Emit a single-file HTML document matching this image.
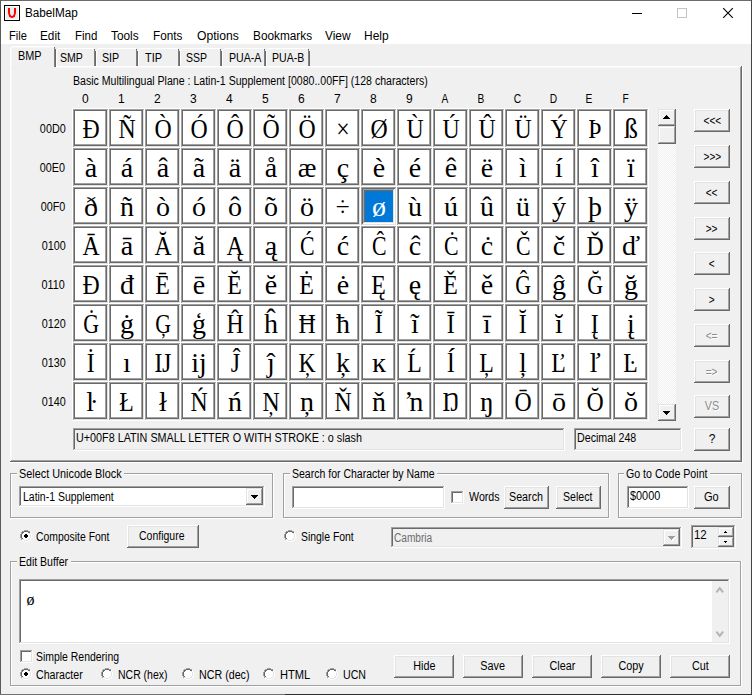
<!DOCTYPE html>
<html lang="en"><head><meta charset="utf-8"><title>BabelMap</title>
<style>
html,body{margin:0;padding:0}
body{width:752px;height:695px;overflow:hidden;background:#f0f0f0;position:relative;font-family:'Liberation Sans',sans-serif;font-size:12px;line-height:12px;color:#000}
div{position:absolute;box-sizing:border-box}
.t{position:absolute;white-space:pre;transform-origin:0 50%}
.c{width:36px;height:39px;background:#fff;font-family:'Liberation Serif',serif;font-size:28px;line-height:28px;text-align:center;padding-top:6px;
 box-shadow:inset -1px -1px 0 #fff, inset 1px 1px 0 #a0a0a0, inset -2px -2px 0 #e3e3e3, inset 2px 2px 0 #696969, inset -3px -3px 0 #696969, inset -4px -4px 0 #a0a0a0}
.g{display:inline-block}
.c.s{box-shadow:inset -1px -1px 0 #fff, inset 1px 1px 0 #a0a0a0, inset -2px -2px 0 #e3e3e3, inset 2px 2px 0 #696969, inset -3px -3px 0 #fff, inset 3px 3px 0 #a0a0a0,inset -4px -4px 0 #e3e3e3, inset 4px 4px 0 #696969;color:#fff}
.c.s b{font-weight:normal;display:block;position:absolute;left:4px;top:4px;width:28px;height:31px;background:#0078d7;padding-top:2px;box-sizing:border-box}
.btn{background:#f0f0f0;box-shadow:inset -1px -1px 0 #696969, inset 1px 1px 0 #fff, inset -2px -2px 0 #a0a0a0, inset 2px 2px 0 #e3e3e3}
.sb{background:#f0f0f0;box-shadow:inset -1px -1px 0 #696969, inset 1px 1px 0 #e3e3e3, inset -2px -2px 0 #a0a0a0, inset 2px 2px 0 #fff}
.sunk1{box-shadow:inset -1px -1px 0 #fff, inset 1px 1px 0 #a0a0a0}
.sunk2{box-shadow:inset -1px -1px 0 #fff, inset 1px 1px 0 #a0a0a0, inset -2px -2px 0 #e3e3e3, inset 2px 2px 0 #696969}
.grp{box-shadow:inset -1px -1px 0 #fff, inset 1px 1px 0 #a0a0a0, inset -2px -2px 0 #a0a0a0, inset 2px 2px 0 #fff}
.radio::before{content:'';position:absolute;left:0;top:0;width:1px;height:1px;box-shadow:4px 0px 0 #a0a0a0,5px 0px 0 #a0a0a0,6px 0px 0 #a0a0a0,7px 0px 0 #a0a0a0,2px 1px 0 #a0a0a0,3px 1px 0 #a0a0a0,4px 1px 0 #696969,5px 1px 0 #696969,6px 1px 0 #696969,7px 1px 0 #696969,8px 1px 0 #a0a0a0,9px 1px 0 #a0a0a0,1px 2px 0 #a0a0a0,2px 2px 0 #696969,3px 2px 0 #696969,4px 2px 0 #fff,5px 2px 0 #fff,6px 2px 0 #fff,7px 2px 0 #fff,8px 2px 0 #696969,9px 2px 0 #696969,10px 2px 0 #fff,1px 3px 0 #a0a0a0,2px 3px 0 #696969,3px 3px 0 #fff,4px 3px 0 #fff,5px 3px 0 #fff,6px 3px 0 #fff,7px 3px 0 #fff,8px 3px 0 #fff,9px 3px 0 #e3e3e3,10px 3px 0 #fff,0px 4px 0 #a0a0a0,1px 4px 0 #696969,2px 4px 0 #fff,3px 4px 0 #fff,4px 4px 0 #fff,5px 4px 0 #fff,6px 4px 0 #fff,7px 4px 0 #fff,8px 4px 0 #fff,9px 4px 0 #fff,10px 4px 0 #e3e3e3,11px 4px 0 #fff,0px 5px 0 #a0a0a0,1px 5px 0 #696969,2px 5px 0 #fff,3px 5px 0 #fff,4px 5px 0 #fff,5px 5px 0 #fff,6px 5px 0 #fff,7px 5px 0 #fff,8px 5px 0 #fff,9px 5px 0 #fff,10px 5px 0 #e3e3e3,11px 5px 0 #fff,0px 6px 0 #a0a0a0,1px 6px 0 #696969,2px 6px 0 #fff,3px 6px 0 #fff,4px 6px 0 #fff,5px 6px 0 #fff,6px 6px 0 #fff,7px 6px 0 #fff,8px 6px 0 #fff,9px 6px 0 #fff,10px 6px 0 #e3e3e3,11px 6px 0 #fff,0px 7px 0 #a0a0a0,1px 7px 0 #696969,2px 7px 0 #fff,3px 7px 0 #fff,4px 7px 0 #fff,5px 7px 0 #fff,6px 7px 0 #fff,7px 7px 0 #fff,8px 7px 0 #fff,9px 7px 0 #fff,10px 7px 0 #e3e3e3,11px 7px 0 #fff,1px 8px 0 #a0a0a0,2px 8px 0 #696969,3px 8px 0 #fff,4px 8px 0 #fff,5px 8px 0 #fff,6px 8px 0 #fff,7px 8px 0 #fff,8px 8px 0 #fff,9px 8px 0 #e3e3e3,10px 8px 0 #fff,1px 9px 0 #a0a0a0,2px 9px 0 #e3e3e3,3px 9px 0 #e3e3e3,4px 9px 0 #fff,5px 9px 0 #fff,6px 9px 0 #fff,7px 9px 0 #fff,8px 9px 0 #e3e3e3,9px 9px 0 #e3e3e3,10px 9px 0 #fff,2px 10px 0 #fff,3px 10px 0 #fff,4px 10px 0 #e3e3e3,5px 10px 0 #e3e3e3,6px 10px 0 #e3e3e3,7px 10px 0 #e3e3e3,8px 10px 0 #fff,9px 10px 0 #fff,4px 11px 0 #fff,5px 11px 0 #fff,6px 11px 0 #fff,7px 11px 0 #fff}
.radio.on::after{content:'';position:absolute;left:0;top:0;width:1px;height:1px;box-shadow:5px 4px 0 #000,6px 4px 0 #000,4px 5px 0 #000,5px 5px 0 #000,6px 5px 0 #000,7px 5px 0 #000,4px 6px 0 #000,5px 6px 0 #000,6px 6px 0 #000,7px 6px 0 #000,5px 7px 0 #000,6px 7px 0 #000}
</style></head>
<body>
<div style="left:0px;top:0px;width:752px;height:1px;background:#6b6b6b"></div>
<div style="left:0px;top:0px;width:1px;height:695px;background:#5a5a5a"></div>
<div style="left:751px;top:0px;width:1px;height:695px;background:#444"></div>
<div style="left:0px;top:694px;width:752px;height:1px;background:linear-gradient(90deg,#707070 0 285px,#303030 285px 100%)"></div>
<div style="left:1px;top:1px;width:750px;height:43px;background:#fff"></div>
<div style="left:4px;top:5px;width:16px;height:16px;background:#ececec;box-shadow:inset 0 0 0 1px #000, inset 0 0 0 2px #fff"><div style="left:4px;top:3px;width:8px;height:10px;border:2px solid #f00;border-top:none;border-radius:0 0 4px 4px / 0 0 6px 6px"></div></div>
<div style="left:632px;top:13px;width:10px;height:1px;background:#000"></div>
<div style="left:677px;top:8px;width:10px;height:10px;border:1px solid #c4c4c4;box-sizing:border-box"></div>
<svg style="position:absolute;left:722px;top:7px" width="12" height="12" viewBox="0 0 12 12"><path d="M1.2 1.2 L10.8 10.8 M10.8 1.2 L1.2 10.8" stroke="#000" stroke-width="1.1" fill="none"/></svg>
<div style="left:10px;top:66px;width:733px;height:397px;box-shadow: inset -1px -1px 0 #fff, inset -2px -2px 0 #696969, inset 1px 1px 0 #fff, inset -3px -3px 0 #a0a0a0, inset 2px 2px 0 #f6f6f6"></div>
<div style="left:58px;top:48px;width:36px;height:1px;background:#fff"></div>
<div style="left:57px;top:49px;width:1px;height:1px;background:#fff"></div>
<div style="left:56px;top:50px;width:1px;height:16px;background:#fff"></div>
<div style="left:94px;top:50px;width:1px;height:16px;background:#808080"></div>
<div style="left:95px;top:51px;width:1px;height:15px;background:#696969"></div>
<div style="left:94px;top:49px;width:1px;height:1px;background:#696969"></div>
<div style="left:98px;top:48px;width:38px;height:1px;background:#fff"></div>
<div style="left:97px;top:49px;width:1px;height:1px;background:#fff"></div>
<div style="left:96px;top:50px;width:1px;height:16px;background:#fff"></div>
<div style="left:136px;top:50px;width:1px;height:16px;background:#808080"></div>
<div style="left:137px;top:51px;width:1px;height:15px;background:#696969"></div>
<div style="left:136px;top:49px;width:1px;height:1px;background:#696969"></div>
<div style="left:140px;top:48px;width:38px;height:1px;background:#fff"></div>
<div style="left:139px;top:49px;width:1px;height:1px;background:#fff"></div>
<div style="left:138px;top:50px;width:1px;height:16px;background:#fff"></div>
<div style="left:178px;top:50px;width:1px;height:16px;background:#808080"></div>
<div style="left:179px;top:51px;width:1px;height:15px;background:#696969"></div>
<div style="left:178px;top:49px;width:1px;height:1px;background:#696969"></div>
<div style="left:182px;top:48px;width:38px;height:1px;background:#fff"></div>
<div style="left:181px;top:49px;width:1px;height:1px;background:#fff"></div>
<div style="left:180px;top:50px;width:1px;height:16px;background:#fff"></div>
<div style="left:220px;top:50px;width:1px;height:16px;background:#808080"></div>
<div style="left:221px;top:51px;width:1px;height:15px;background:#696969"></div>
<div style="left:220px;top:49px;width:1px;height:1px;background:#696969"></div>
<div style="left:224px;top:48px;width:40px;height:1px;background:#fff"></div>
<div style="left:223px;top:49px;width:1px;height:1px;background:#fff"></div>
<div style="left:222px;top:50px;width:1px;height:16px;background:#fff"></div>
<div style="left:264px;top:50px;width:1px;height:16px;background:#808080"></div>
<div style="left:265px;top:51px;width:1px;height:15px;background:#696969"></div>
<div style="left:264px;top:49px;width:1px;height:1px;background:#696969"></div>
<div style="left:268px;top:48px;width:40px;height:1px;background:#fff"></div>
<div style="left:267px;top:49px;width:1px;height:1px;background:#fff"></div>
<div style="left:266px;top:50px;width:1px;height:16px;background:#fff"></div>
<div style="left:308px;top:50px;width:1px;height:16px;background:#808080"></div>
<div style="left:309px;top:51px;width:1px;height:15px;background:#696969"></div>
<div style="left:308px;top:49px;width:1px;height:1px;background:#696969"></div>
<div style="left:10px;top:46px;width:46px;height:22px;background:#f0f0f0"></div>
<div style="left:12px;top:46px;width:42px;height:1px;background:#fff"></div>
<div style="left:11px;top:47px;width:1px;height:1px;background:#fff"></div>
<div style="left:10px;top:48px;width:1px;height:19px;background:#fff"></div>
<div style="left:11px;top:48px;width:1px;height:19px;background:#f6f6f6"></div>
<div style="left:12px;top:47px;width:42px;height:1px;background:#f6f6f6"></div>
<div style="left:54px;top:48px;width:1px;height:19px;background:#808080"></div>
<div style="left:55px;top:49px;width:1px;height:18px;background:#696969"></div>
<div style="left:54px;top:47px;width:1px;height:1px;background:#696969"></div>
<div style="left:72px;top:108px;width:577px;height:313px;background:#fff"></div>
<div class="c" style="left:73px;top:109px"><span class="g" style="transform:scaleX(0.85)">Ð</span></div>
<div class="c" style="left:109px;top:109px"><span class="g" style="transform:scaleX(0.85)">Ñ</span></div>
<div class="c" style="left:145px;top:109px"><span class="g" style="transform:scaleX(0.85)">Ò</span></div>
<div class="c" style="left:181px;top:109px"><span class="g" style="transform:scaleX(0.85)">Ó</span></div>
<div class="c" style="left:217px;top:109px"><span class="g" style="transform:scaleX(0.85)">Ô</span></div>
<div class="c" style="left:253px;top:109px"><span class="g" style="transform:scaleX(0.85)">Õ</span></div>
<div class="c" style="left:289px;top:109px"><span class="g" style="transform:scaleX(0.85)">Ö</span></div>
<div class="c" style="left:325px;top:109px"><span class="g" style="transform:scaleX(0.85)">×</span></div>
<div class="c" style="left:361px;top:109px"><span class="g" style="transform:scaleX(0.85)">Ø</span></div>
<div class="c" style="left:397px;top:109px"><span class="g" style="transform:scaleX(0.85)">Ù</span></div>
<div class="c" style="left:433px;top:109px"><span class="g" style="transform:scaleX(0.85)">Ú</span></div>
<div class="c" style="left:469px;top:109px"><span class="g" style="transform:scaleX(0.85)">Û</span></div>
<div class="c" style="left:505px;top:109px"><span class="g" style="transform:scaleX(0.85)">Ü</span></div>
<div class="c" style="left:541px;top:109px"><span class="g" style="transform:scaleX(0.85)">Ý</span></div>
<div class="c" style="left:577px;top:109px"><span class="g" style="transform:scaleX(0.85)">Þ</span></div>
<div class="c" style="left:613px;top:109px">ß</div>
<div class="c" style="left:73px;top:148px">à</div>
<div class="c" style="left:109px;top:148px">á</div>
<div class="c" style="left:145px;top:148px">â</div>
<div class="c" style="left:181px;top:148px">ã</div>
<div class="c" style="left:217px;top:148px">ä</div>
<div class="c" style="left:253px;top:148px">å</div>
<div class="c" style="left:289px;top:148px">æ</div>
<div class="c" style="left:325px;top:148px">ç</div>
<div class="c" style="left:361px;top:148px">è</div>
<div class="c" style="left:397px;top:148px">é</div>
<div class="c" style="left:433px;top:148px">ê</div>
<div class="c" style="left:469px;top:148px">ë</div>
<div class="c" style="left:505px;top:148px">ì</div>
<div class="c" style="left:541px;top:148px">í</div>
<div class="c" style="left:577px;top:148px">î</div>
<div class="c" style="left:613px;top:148px">ï</div>
<div class="c" style="left:73px;top:187px">ð</div>
<div class="c" style="left:109px;top:187px">ñ</div>
<div class="c" style="left:145px;top:187px">ò</div>
<div class="c" style="left:181px;top:187px">ó</div>
<div class="c" style="left:217px;top:187px">ô</div>
<div class="c" style="left:253px;top:187px">õ</div>
<div class="c" style="left:289px;top:187px">ö</div>
<div class="c" style="left:325px;top:187px"><span class="g" style="transform:scaleX(0.9)">÷</span></div>
<div class="c s" style="left:361px;top:187px"><b>ø</b></div>
<div class="c" style="left:397px;top:187px">ù</div>
<div class="c" style="left:433px;top:187px">ú</div>
<div class="c" style="left:469px;top:187px">û</div>
<div class="c" style="left:505px;top:187px">ü</div>
<div class="c" style="left:541px;top:187px">ý</div>
<div class="c" style="left:577px;top:187px">þ</div>
<div class="c" style="left:613px;top:187px">ÿ</div>
<div class="c" style="left:73px;top:226px"><span class="g" style="transform:scaleX(0.85)">Ā</span></div>
<div class="c" style="left:109px;top:226px">ā</div>
<div class="c" style="left:145px;top:226px"><span class="g" style="transform:scaleX(0.85)">Ă</span></div>
<div class="c" style="left:181px;top:226px">ă</div>
<div class="c" style="left:217px;top:226px"><span class="g" style="transform:scaleX(0.85)">Ą</span></div>
<div class="c" style="left:253px;top:226px">ą</div>
<div class="c" style="left:289px;top:226px"><span class="g" style="transform:scaleX(0.78)">Ć</span></div>
<div class="c" style="left:325px;top:226px">ć</div>
<div class="c" style="left:361px;top:226px"><span class="g" style="transform:scaleX(0.78)">Ĉ</span></div>
<div class="c" style="left:397px;top:226px">ĉ</div>
<div class="c" style="left:433px;top:226px"><span class="g" style="transform:scaleX(0.78)">Ċ</span></div>
<div class="c" style="left:469px;top:226px">ċ</div>
<div class="c" style="left:505px;top:226px"><span class="g" style="transform:scaleX(0.78)">Č</span></div>
<div class="c" style="left:541px;top:226px">č</div>
<div class="c" style="left:577px;top:226px"><span class="g" style="transform:scaleX(0.85)">Ď</span></div>
<div class="c" style="left:613px;top:226px">ď</div>
<div class="c" style="left:73px;top:265px"><span class="g" style="transform:scaleX(0.85)">Đ</span></div>
<div class="c" style="left:109px;top:265px">đ</div>
<div class="c" style="left:145px;top:265px"><span class="g" style="transform:scaleX(0.85)">Ē</span></div>
<div class="c" style="left:181px;top:265px">ē</div>
<div class="c" style="left:217px;top:265px"><span class="g" style="transform:scaleX(0.85)">Ĕ</span></div>
<div class="c" style="left:253px;top:265px">ĕ</div>
<div class="c" style="left:289px;top:265px"><span class="g" style="transform:scaleX(0.85)">Ė</span></div>
<div class="c" style="left:325px;top:265px">ė</div>
<div class="c" style="left:361px;top:265px"><span class="g" style="transform:scaleX(0.85)">Ę</span></div>
<div class="c" style="left:397px;top:265px">ę</div>
<div class="c" style="left:433px;top:265px"><span class="g" style="transform:scaleX(0.85)">Ě</span></div>
<div class="c" style="left:469px;top:265px">ě</div>
<div class="c" style="left:505px;top:265px"><span class="g" style="transform:scaleX(0.78)">Ĝ</span></div>
<div class="c" style="left:541px;top:265px">ĝ</div>
<div class="c" style="left:577px;top:265px"><span class="g" style="transform:scaleX(0.78)">Ğ</span></div>
<div class="c" style="left:613px;top:265px">ğ</div>
<div class="c" style="left:73px;top:304px"><span class="g" style="transform:scaleX(0.78)">Ġ</span></div>
<div class="c" style="left:109px;top:304px">ġ</div>
<div class="c" style="left:145px;top:304px"><span class="g" style="transform:scaleX(0.78)">Ģ</span></div>
<div class="c" style="left:181px;top:304px">ģ</div>
<div class="c" style="left:217px;top:304px"><span class="g" style="transform:scaleX(0.85)">Ĥ</span></div>
<div class="c" style="left:253px;top:304px">ĥ</div>
<div class="c" style="left:289px;top:304px"><span class="g" style="transform:scaleX(0.85)">Ħ</span></div>
<div class="c" style="left:325px;top:304px">ħ</div>
<div class="c" style="left:361px;top:304px"><span class="g" style="transform:scaleX(0.85)">Ĩ</span></div>
<div class="c" style="left:397px;top:304px">ĩ</div>
<div class="c" style="left:433px;top:304px"><span class="g" style="transform:scaleX(0.85)">Ī</span></div>
<div class="c" style="left:469px;top:304px">ī</div>
<div class="c" style="left:505px;top:304px"><span class="g" style="transform:scaleX(0.85)">Ĭ</span></div>
<div class="c" style="left:541px;top:304px">ĭ</div>
<div class="c" style="left:577px;top:304px"><span class="g" style="transform:scaleX(0.85)">Į</span></div>
<div class="c" style="left:613px;top:304px">į</div>
<div class="c" style="left:73px;top:343px"><span class="g" style="transform:scaleX(0.85)">İ</span></div>
<div class="c" style="left:109px;top:343px">ı</div>
<div class="c" style="left:145px;top:343px"><span class="g" style="transform:scaleX(0.85)">Ĳ</span></div>
<div class="c" style="left:181px;top:343px">ĳ</div>
<div class="c" style="left:217px;top:343px"><span class="g" style="transform:scaleX(0.85)">Ĵ</span></div>
<div class="c" style="left:253px;top:343px">ĵ</div>
<div class="c" style="left:289px;top:343px"><span class="g" style="transform:scaleX(0.85)">Ķ</span></div>
<div class="c" style="left:325px;top:343px">ķ</div>
<div class="c" style="left:361px;top:343px">ĸ</div>
<div class="c" style="left:397px;top:343px"><span class="g" style="transform:scaleX(0.85)">Ĺ</span></div>
<div class="c" style="left:433px;top:343px">ĺ</div>
<div class="c" style="left:469px;top:343px"><span class="g" style="transform:scaleX(0.85)">Ļ</span></div>
<div class="c" style="left:505px;top:343px">ļ</div>
<div class="c" style="left:541px;top:343px"><span class="g" style="transform:scaleX(0.85)">Ľ</span></div>
<div class="c" style="left:577px;top:343px">ľ</div>
<div class="c" style="left:613px;top:343px"><span class="g" style="transform:scaleX(0.85)">Ŀ</span></div>
<div class="c" style="left:73px;top:382px">ŀ</div>
<div class="c" style="left:109px;top:382px"><span class="g" style="transform:scaleX(0.85)">Ł</span></div>
<div class="c" style="left:145px;top:382px">ł</div>
<div class="c" style="left:181px;top:382px"><span class="g" style="transform:scaleX(0.85)">Ń</span></div>
<div class="c" style="left:217px;top:382px">ń</div>
<div class="c" style="left:253px;top:382px"><span class="g" style="transform:scaleX(0.85)">Ņ</span></div>
<div class="c" style="left:289px;top:382px">ņ</div>
<div class="c" style="left:325px;top:382px"><span class="g" style="transform:scaleX(0.85)">Ň</span></div>
<div class="c" style="left:361px;top:382px">ň</div>
<div class="c" style="left:397px;top:382px">ŉ</div>
<div class="c" style="left:433px;top:382px"><span class="g" style="transform:scaleX(0.85)">Ŋ</span></div>
<div class="c" style="left:469px;top:382px">ŋ</div>
<div class="c" style="left:505px;top:382px"><span class="g" style="transform:scaleX(0.85)">Ō</span></div>
<div class="c" style="left:541px;top:382px">ō</div>
<div class="c" style="left:577px;top:382px"><span class="g" style="transform:scaleX(0.85)">Ŏ</span></div>
<div class="c" style="left:613px;top:382px">ŏ</div>
<div style="left:658px;top:109px;width:18px;height:312px;background:#f0f0f0 repeating-conic-gradient(#fff 0 25%, #f0f0f0 0 50%) 0 0/2px 2px"></div>
<div class="sb" style="left:658px;top:109px;width:18px;height:17px;"></div>
<div class="sb" style="left:658px;top:126px;width:18px;height:18px;"></div>
<div class="sb" style="left:658px;top:404px;width:18px;height:17px;"></div>
<div style="left:666px;top:115px;width:1px;height:1px;background:#000"></div>
<div style="left:665px;top:116px;width:3px;height:1px;background:#000"></div>
<div style="left:664px;top:117px;width:5px;height:1px;background:#000"></div>
<div style="left:663px;top:118px;width:7px;height:1px;background:#000"></div>
<div style="left:663px;top:411px;width:7px;height:1px;background:#000"></div>
<div style="left:664px;top:412px;width:5px;height:1px;background:#000"></div>
<div style="left:665px;top:413px;width:3px;height:1px;background:#000"></div>
<div style="left:666px;top:414px;width:1px;height:1px;background:#000"></div>
<div class="btn" style="left:694px;top:109px;width:36px;height:23px;"></div>
<div class="btn" style="left:694px;top:145px;width:36px;height:23px;"></div>
<div class="btn" style="left:694px;top:181px;width:36px;height:23px;"></div>
<div class="btn" style="left:694px;top:217px;width:36px;height:23px;"></div>
<div class="btn" style="left:694px;top:252px;width:36px;height:23px;"></div>
<div class="btn" style="left:694px;top:288px;width:36px;height:23px;"></div>
<div class="btn" style="left:694px;top:324px;width:36px;height:23px;"></div>
<div class="btn" style="left:694px;top:360px;width:36px;height:23px;"></div>
<div class="btn" style="left:694px;top:395px;width:36px;height:23px;"></div>
<div class="btn" style="left:694px;top:428px;width:36px;height:23px;"></div>
<div class="sunk2" style="left:73px;top:428px;width:492px;height:23px;"></div>
<div class="sunk2" style="left:574px;top:428px;width:108px;height:23px;"></div>
<div class="grp" style="left:10px;top:473px;width:264px;height:46px;"></div>
<div style="left:17px;top:471px;width:107px;height:5px;background:#f0f0f0"></div>
<div class="grp" style="left:283px;top:473px;width:327px;height:46px;"></div>
<div style="left:290px;top:471px;width:147px;height:5px;background:#f0f0f0"></div>
<div class="grp" style="left:618px;top:473px;width:125px;height:46px;"></div>
<div style="left:624px;top:471px;width:86px;height:5px;background:#f0f0f0"></div>
<div class="grp" style="left:10px;top:561px;width:732px;height:126px;"></div>
<div style="left:17px;top:559px;width:54px;height:5px;background:#f0f0f0"></div>
<div class="sunk2" style="left:19px;top:486px;width:246px;height:21px;background:#fff"></div>
<div class="sb" style="left:246px;top:488px;width:17px;height:17px;"></div>
<div style="left:251px;top:495px;width:7px;height:1px;background:#000"></div>
<div style="left:252px;top:496px;width:5px;height:1px;background:#000"></div>
<div style="left:253px;top:497px;width:3px;height:1px;background:#000"></div>
<div style="left:254px;top:498px;width:1px;height:1px;background:#000"></div>
<div class="sunk2" style="left:292px;top:486px;width:153px;height:23px;background:#fff"></div>
<div class="sunk2" style="left:451px;top:491px;width:13px;height:13px;background:#fff"></div>
<div class="btn" style="left:504px;top:486px;width:45px;height:23px;"></div>
<div class="btn" style="left:556px;top:486px;width:45px;height:23px;"></div>
<div class="sunk2" style="left:627px;top:486px;width:62px;height:23px;background:#fff"></div>
<div class="btn" style="left:694px;top:486px;width:36px;height:23px;"></div>
<div class="radio on" style="left:20px;top:530px;width:12px;height:12px;"></div>
<div class="btn" style="left:127px;top:525px;width:72px;height:23px;"></div>
<div class="radio" style="left:284px;top:530px;width:12px;height:12px;"></div>
<div class="sunk2" style="left:391px;top:527px;width:291px;height:21px;background:#f0f0f0"></div>
<div class="sb" style="left:663px;top:529px;width:17px;height:17px;"></div>
<div style="left:669px;top:537px;width:7px;height:1px;background:#fff"></div>
<div style="left:670px;top:538px;width:5px;height:1px;background:#fff"></div>
<div style="left:671px;top:539px;width:3px;height:1px;background:#fff"></div>
<div style="left:672px;top:540px;width:1px;height:1px;background:#fff"></div>
<div style="left:668px;top:536px;width:7px;height:1px;background:#a0a0a0"></div>
<div style="left:669px;top:537px;width:5px;height:1px;background:#a0a0a0"></div>
<div style="left:670px;top:538px;width:3px;height:1px;background:#a0a0a0"></div>
<div style="left:671px;top:539px;width:1px;height:1px;background:#a0a0a0"></div>
<div class="sunk2" style="left:691px;top:525px;width:45px;height:24px;background:#f0f0f0"></div>
<div class="sb" style="left:718px;top:527px;width:16px;height:10px;"></div>
<div class="sb" style="left:718px;top:537px;width:16px;height:10px;"></div>
<div style="left:725px;top:531px;width:1px;height:1px;background:#000"></div>
<div style="left:724px;top:532px;width:3px;height:1px;background:#000"></div>
<div style="left:724px;top:541px;width:3px;height:1px;background:#000"></div>
<div style="left:725px;top:542px;width:1px;height:1px;background:#000"></div>
<div class="sunk2" style="left:19px;top:579px;width:711px;height:65px;background:#fff"></div>
<div style="left:712px;top:581px;width:16px;height:61px;background:#f0f0f0"></div>
<svg style="position:absolute;left:712px;top:581px" width="16" height="61" viewBox="0 0 16 61"><path d="M4.4 11.4 L7.75 7.2 L11.1 11.4 M4.4 50.6 L7.75 54.8 L11.1 50.6" stroke="#b4b4b4" stroke-width="2" fill="none"/></svg>
<div class="sunk2" style="left:20px;top:650px;width:13px;height:13px;background:#fff"></div>
<div class="radio on" style="left:20px;top:668px;width:12px;height:12px;"></div>
<div class="radio" style="left:101px;top:668px;width:12px;height:12px;"></div>
<div class="radio" style="left:182px;top:668px;width:12px;height:12px;"></div>
<div class="radio" style="left:263px;top:668px;width:12px;height:12px;"></div>
<div class="radio" style="left:326px;top:668px;width:12px;height:12px;"></div>
<div class="btn" style="left:394px;top:655px;width:60px;height:23px;"></div>
<div class="btn" style="left:463px;top:655px;width:60px;height:23px;"></div>
<div class="btn" style="left:532px;top:655px;width:60px;height:23px;"></div>
<div class="btn" style="left:601px;top:655px;width:60px;height:23px;"></div>
<div class="btn" style="left:670px;top:655px;width:60px;height:23px;"></div>
<span class="t" style="left:25.15px;top:7px;transform:scaleX(0.9760);">BabelMap</span>
<span class="t" style="left:8.60px;top:30px;transform:scaleX(0.9228);">File</span>
<span class="t" style="left:40.35px;top:30px;transform:scaleX(0.9837);">Edit</span>
<span class="t" style="left:74.60px;top:30px;transform:scaleX(0.9574);">Find</span>
<span class="t" style="left:111.35px;top:30px;transform:scaleX(0.9852);">Tools</span>
<span class="t" style="left:153.10px;top:30px;transform:scaleX(0.9778);">Fonts</span>
<span class="t" style="left:196.85px;top:30px;transform:scaleX(1.0119);">Options</span>
<span class="t" style="left:252.60px;top:30px;transform:scaleX(0.9845);">Bookmarks</span>
<span class="t" style="left:325.10px;top:30px;transform:scaleX(0.9924);">View</span>
<span class="t" style="left:364.10px;top:30px;transform:scaleX(0.9965);">Help</span>
<span class="t" style="left:17.80px;top:50px;transform:scaleX(0.9033);">BMP</span>
<span class="t" style="left:59.65px;top:52px;transform:scaleX(0.8783);">SMP</span>
<span class="t" style="left:101.50px;top:52px;transform:scaleX(0.8892);">SIP</span>
<span class="t" style="left:144.60px;top:52px;transform:scaleX(0.9105);">TIP</span>
<span class="t" style="left:186.40px;top:52px;transform:scaleX(0.8744);">SSP</span>
<span class="t" style="left:228.60px;top:52px;transform:scaleX(0.8831);">PUA-A</span>
<span class="t" style="left:272.40px;top:52px;transform:scaleX(0.8777);">PUA-B</span>
<span class="t" style="left:72.65px;top:75px;transform:scaleX(0.8805);">Basic Multilingual Plane : Latin-1 Supplement [0080..00FF] (128 characters)</span>
<span class="t" style="left:81.96px;top:93px;">0</span>
<span class="t" style="left:117.96px;top:93px;">1</span>
<span class="t" style="left:153.96px;top:93px;">2</span>
<span class="t" style="left:189.96px;top:93px;">3</span>
<span class="t" style="left:225.96px;top:93px;">4</span>
<span class="t" style="left:261.96px;top:93px;">5</span>
<span class="t" style="left:297.96px;top:93px;">6</span>
<span class="t" style="left:333.96px;top:93px;">7</span>
<span class="t" style="left:369.96px;top:93px;">8</span>
<span class="t" style="left:405.96px;top:93px;">9</span>
<span class="t" style="left:441.29px;top:93px;transform:scaleX(0.85);transform-origin:50% 50%;">A</span>
<span class="t" style="left:477.29px;top:93px;transform:scaleX(0.85);transform-origin:50% 50%;">B</span>
<span class="t" style="left:512.96px;top:93px;transform:scaleX(0.85);transform-origin:50% 50%;">C</span>
<span class="t" style="left:548.96px;top:93px;transform:scaleX(0.85);transform-origin:50% 50%;">D</span>
<span class="t" style="left:585.29px;top:93px;transform:scaleX(0.85);transform-origin:50% 50%;">E</span>
<span class="t" style="left:621.63px;top:93px;transform:scaleX(0.85);transform-origin:50% 50%;">F</span>
<span class="t" style="left:36.61px;top:123px;transform:scaleX(0.9);transform-origin:100% 50%;">00D0</span>
<span class="t" style="left:37.27px;top:162px;transform:scaleX(0.9);transform-origin:100% 50%;">00E0</span>
<span class="t" style="left:37.94px;top:201px;transform:scaleX(0.9);transform-origin:100% 50%;">00F0</span>
<span class="t" style="left:38.60px;top:240px;transform:scaleX(0.9);transform-origin:100% 50%;">0100</span>
<span class="t" style="left:39.49px;top:279px;transform:scaleX(0.9);transform-origin:100% 50%;">0110</span>
<span class="t" style="left:38.60px;top:318px;transform:scaleX(0.9);transform-origin:100% 50%;">0120</span>
<span class="t" style="left:38.60px;top:357px;transform:scaleX(0.9);transform-origin:100% 50%;">0130</span>
<span class="t" style="left:38.60px;top:396px;transform:scaleX(0.9);transform-origin:100% 50%;">0140</span>
<span class="t" style="left:700.61px;top:114px;font-size:13px;line-height:13px;transform:scaleX(0.78);transform-origin:50% 50%;">&lt;&lt;&lt;</span>
<span class="t" style="left:700.61px;top:150px;font-size:13px;line-height:13px;transform:scaleX(0.78);transform-origin:50% 50%;">&gt;&gt;&gt;</span>
<span class="t" style="left:704.41px;top:186px;font-size:13px;line-height:13px;transform:scaleX(0.78);transform-origin:50% 50%;">&lt;&lt;</span>
<span class="t" style="left:704.41px;top:222px;font-size:13px;line-height:13px;transform:scaleX(0.78);transform-origin:50% 50%;">&gt;&gt;</span>
<span class="t" style="left:708.20px;top:257px;font-size:13px;line-height:13px;transform:scaleX(0.78);transform-origin:50% 50%;">&lt;</span>
<span class="t" style="left:708.20px;top:293px;font-size:13px;line-height:13px;transform:scaleX(0.78);transform-origin:50% 50%;">&gt;</span>
<span class="t" style="left:705.41px;top:330px;font-size:13px;line-height:13px;color:#fff;transform:scaleX(0.78);transform-origin:50% 50%;">&lt;=</span>
<span class="t" style="left:704.41px;top:329px;font-size:13px;line-height:13px;color:#8c8c8c;transform:scaleX(0.78);transform-origin:50% 50%;">&lt;=</span>
<span class="t" style="left:705.41px;top:366px;font-size:13px;line-height:13px;color:#fff;transform:scaleX(0.78);transform-origin:50% 50%;">=&gt;</span>
<span class="t" style="left:704.41px;top:365px;font-size:13px;line-height:13px;color:#8c8c8c;transform:scaleX(0.78);transform-origin:50% 50%;">=&gt;</span>
<span class="t" style="left:704.99px;top:401px;color:#fff;transform:scaleX(0.9);transform-origin:50% 50%;">VS</span>
<span class="t" style="left:703.99px;top:400px;color:#8c8c8c;transform:scaleX(0.9);transform-origin:50% 50%;">VS</span>
<span class="t" style="left:708.66px;top:433px;">?</span>
<span class="t" style="left:76.40px;top:432px;transform:scaleX(0.8982);">U+00F8 LATIN SMALL LETTER O WITH STROKE : o slash</span>
<span class="t" style="left:577.15px;top:432px;transform:scaleX(0.8883);">Decimal 248</span>
<span class="t" style="left:18.70px;top:468px;transform:scaleX(0.9057);">Select Unicode Block</span>
<span class="t" style="left:291.90px;top:468px;transform:scaleX(0.8757);">Search for Character by Name</span>
<span class="t" style="left:625.90px;top:468px;transform:scaleX(0.8853);">Go to Code Point</span>
<span class="t" style="left:18.90px;top:556px;transform:scaleX(0.8779);">Edit Buffer</span>
<span class="t" style="left:22.65px;top:491px;transform:scaleX(0.8719);">Latin-1 Supplement</span>
<span class="t" style="left:469.00px;top:491px;transform:scaleX(0.8896);">Words</span>
<span class="t" style="left:508.65px;top:491px;transform:scaleX(0.8940);">Search</span>
<span class="t" style="left:563.00px;top:491px;transform:scaleX(0.8813);">Select</span>
<span class="t" style="left:629.65px;top:490px;transform:scaleX(0.9064);">$0000</span>
<span class="t" style="left:703.90px;top:491px;transform:scaleX(0.9210);">Go</span>
<span class="t" style="left:35.50px;top:531px;transform:scaleX(0.8677);">Composite Font</span>
<span class="t" style="left:138.90px;top:530px;transform:scaleX(0.8745);">Configure</span>
<span class="t" style="left:300.65px;top:531px;transform:scaleX(0.8690);">Single Font</span>
<span class="t" style="left:394.15px;top:532px;color:#6d6d6d;transform:scaleX(0.8433);">Cambria</span>
<span class="t" style="left:694.15px;top:529px;transform:scaleX(0.9544);">12</span>
<span class="t" style="left:26.60px;top:592px;font-size:16px;line-height:16px;font-family:'Liberation Serif', serif;">ø</span>
<span class="t" style="left:36.40px;top:651px;transform:scaleX(0.8701);">Simple Rendering</span>
<span class="t" style="left:36.15px;top:669px;transform:scaleX(0.8873);">Character</span>
<span class="t" style="left:117.65px;top:669px;transform:scaleX(0.8734);">NCR (hex)</span>
<span class="t" style="left:198.65px;top:669px;transform:scaleX(0.8911);">NCR (dec)</span>
<span class="t" style="left:279.90px;top:669px;transform:scaleX(0.9259);">HTML</span>
<span class="t" style="left:342.90px;top:669px;transform:scaleX(0.8846);">UCN</span>
<span class="t" style="left:411.66px;top:660px;transform:scaleX(0.9);transform-origin:50% 50%;">Hide</span>
<span class="t" style="left:479.32px;top:660px;transform:scaleX(0.9);transform-origin:50% 50%;">Save</span>
<span class="t" style="left:547.66px;top:660px;transform:scaleX(0.9);transform-origin:50% 50%;">Clear</span>
<span class="t" style="left:616.99px;top:660px;transform:scaleX(0.9);transform-origin:50% 50%;">Copy</span>
<span class="t" style="left:690.66px;top:660px;transform:scaleX(0.9);transform-origin:50% 50%;">Cut</span>
</body></html>
